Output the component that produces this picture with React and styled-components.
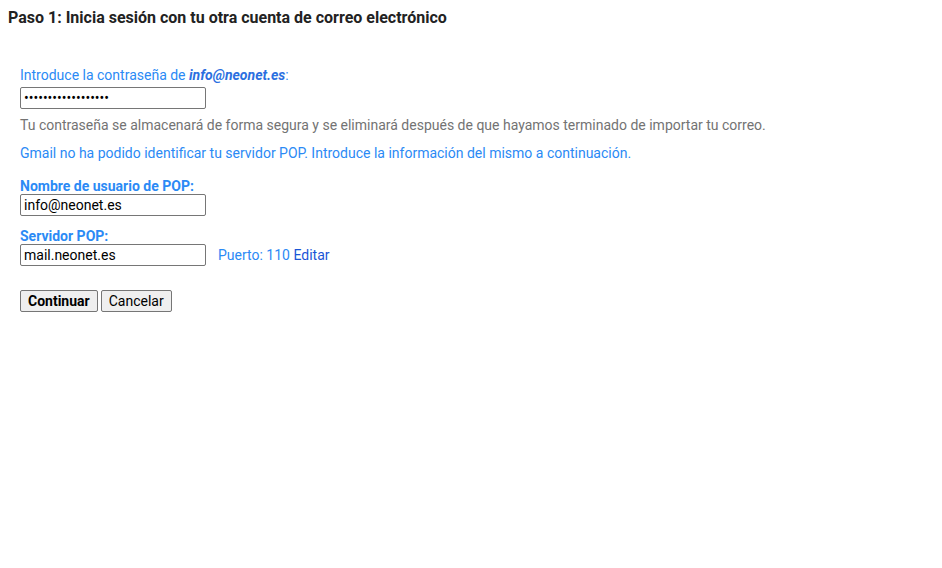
import styled, { createGlobalStyle } from "styled-components";

const GlobalStyle = createGlobalStyle`
  body {
    margin: 0;
    background: #fff;
    font-family: Roboto, "Liberation Sans", Arial, sans-serif;
    font-size: 14px;
    color: #222;
  }
`;

const Page = styled.div`
  padding: 9px 8px;
`;

const Title = styled.h2`
  margin: 0;
  font-size: 16px;
  font-weight: 700;
  line-height: 18px;
  color: #222;
`;

const Form = styled.div`
  padding: 39px 12px 0;
  display: flex;
  flex-direction: column;
`;

const Line = styled.div`
  font-size: 14px;
  line-height: 18px;
  color: ${({ tone }) => (tone === "gray" ? "#737373" : "#2b8af5")};
  margin-top: ${({ top }) => top || 0}px;
`;

const Em = styled.b`
  font-style: italic;
  color: #2b6fe0;
`;

const Label = styled.label`
  font-weight: 700;
  font-size: 14px;
  line-height: 15px;
  color: #2b8af5;
  margin-top: ${({ top }) => top || 0}px;
`;

const Row = styled.div`
  display: flex;
  align-items: center;
  gap: 12px;
  margin-top: ${({ top }) => top || 0}px;
`;

const Input = styled.input`
  box-sizing: border-box;
  width: 186px;
  height: 22px;
  margin: 0;
  padding: 0 3px;
  border: 1px solid #767676;
  border-radius: 2px;
  font-family: Roboto, "Liberation Sans", Arial, sans-serif;
  font-size: 14px;
  color: #000;
  background: #fff;
`;

const Port = styled.span`
  color: #2b8af5;
  font-size: 14px;
`;

const Link = styled.a`
  color: #1a55d6;
  text-decoration: none;
  cursor: pointer;
`;

const Buttons = styled.div`
  display: flex;
  gap: 3px;
  margin-top: 24px;
`;

const Button = styled.button`
  box-sizing: border-box;
  height: 22px;
  padding: 0 7px;
  border: 1px solid #767676;
  border-radius: 2px;
  background: #efefef;
  font-family: Roboto, "Liberation Sans", Arial, sans-serif;
  font-size: 14px;
  font-weight: ${({ primary }) => (primary ? 700 : 400)};
  color: #000;
`;

export default function App() {
  return (
    <Page>
      <GlobalStyle />
      <Title>Paso 1: Inicia sesión con tu otra cuenta de correo electrónico</Title>
      <Form>
        <Line>
          Introduce la contraseña de <Em>info@neonet.es</Em>:
        </Line>
        <Row top={3}>
          <Input type="password" defaultValue="info-neonet-pass12" />
        </Row>
        <Line tone="gray" top={7}>
          Tu contraseña se almacenará de forma segura y se eliminará después de que hayamos terminado de importar tu correo.
        </Line>
        <Line top={10}>
          Gmail no ha podido identificar tu servidor POP. Introduce la información del mismo a continuación.
        </Line>
        <Label top={17}>Nombre de usuario de POP:</Label>
        <Row>
          <Input defaultValue="info@neonet.es" />
        </Row>
        <Label top={13}>Servidor POP:</Label>
        <Row>
          <Input defaultValue="mail.neonet.es" />
          <Port>
            Puerto: 110 <Link>Editar</Link>
          </Port>
        </Row>
        <Buttons>
          <Button primary>Continuar</Button>
          <Button>Cancelar</Button>
        </Buttons>
      </Form>
    </Page>
  );
}
